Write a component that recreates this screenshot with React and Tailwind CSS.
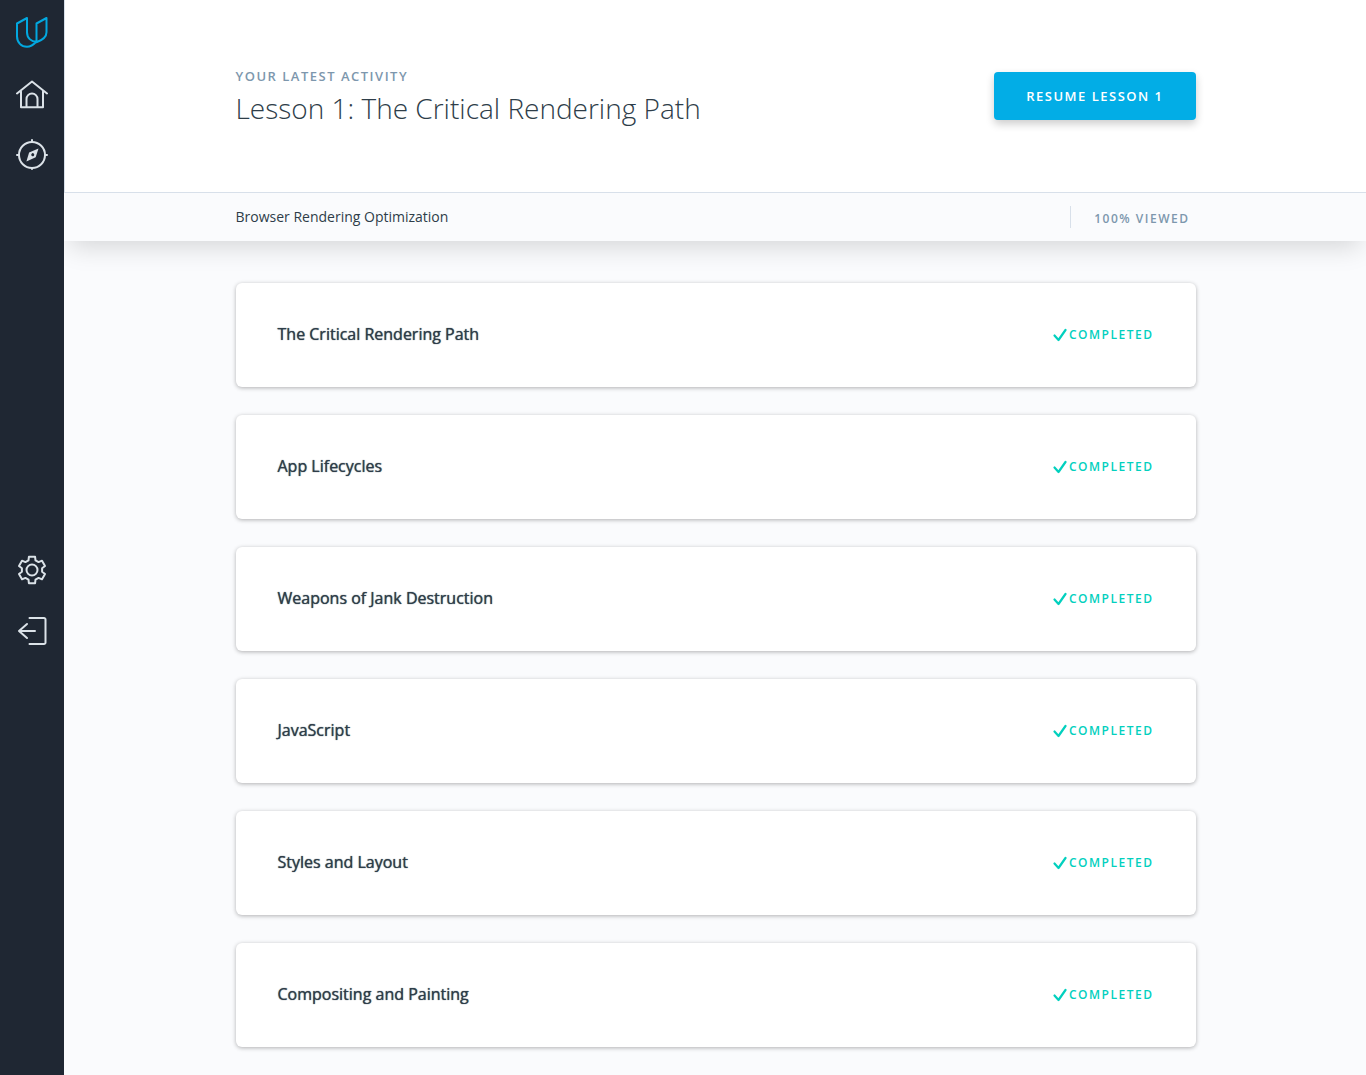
const lessons = [
  'The Critical Rendering Path',
  'App Lifecycles',
  'Weapons of Jank Destruction',
  'JavaScript',
  'Styles and Layout',
  'Compositing and Painting',
];

function Icon({ children }) {
  return (
    <svg
      className="size-8"
      viewBox="0 0 32 32"
      fill="none"
      stroke="currentColor"
      strokeWidth="2"
      strokeLinecap="round"
      strokeLinejoin="round"
      aria-hidden="true"
    >
      {children}
    </svg>
  );
}

function NavLink({ label, className = 'text-[#dbe2e8]', children }) {
  return (
    <a href="#" aria-label={label} className={className}>
      <Icon>{children}</Icon>
    </a>
  );
}

function Sidebar() {
  return (
    <aside className="relative w-16 shrink-0 bg-[#1f2733]">
      <nav className="flex h-[663px] flex-col items-center justify-between py-4">
        <div className="flex flex-col items-center gap-7">
          <NavLink label="Udacity" className="mb-0.5 text-[#02a8e0]">
            <path d="M1 7.5 11 2v14.3c0 5.6 4 9.5 9.500 9.500M1 7.500v12.800c0 6.200 4.300 10.500 10 10.500 3.500 0 6.600-2.200 9.500-5.300V7.500L30.500 2v14.300c0 5.400-5 8.200-10 10" />
          </NavLink>
          <NavLink label="Home">
            <path d="M1 15.500 16 3.500l15 12M5 13.500v15.800h22V13.500M10.500 29V21a5.500 5.500 0 0 1 11 0v8" />
          </NavLink>
          <NavLink label="Catalog">
            <circle cx="16" cy="17" r="13" />
            <path d="M16 2v2M16 30v1M1 17h2M29 17h2" />
            <path fill="currentColor" stroke="none" fillRule="evenodd" d="m22.500 10.500-2.800 8.800-9.300 4.200 2.700-9zm-4.600 5.200a1.500 1.500 0 1 0-2 2.200 1.500 1.500 0 0 0 2-2.200z" />
          </NavLink>
        </div>
        <div className="flex flex-col items-center gap-7">
          <NavLink label="Settings">
            <circle cx="16" cy="15" r="5.5" />
            <path d="M12.9 1.8H19.1L19.5 5.3 22.6 7.1 26 5.7 29 11 26.1 13.2V16.8L29 19 26 24.3 22.6 22.9 19.5 24.7 19.1 28.2H12.9L12.5 24.7 9.4 22.9 6 24.3 3 19 5.9 16.8V13.2L3 11 6 5.7 9.4 7.1 12.5 5.3Z" />
          </NavLink>
          <NavLink label="Sign out">
            <path d="M13.500 3H28a1.500 1.500 0 0 1 1.500 1.500v23A1.500 1.500 0 0 1 28 29H13.500M19 16H3M11 9l-8 7 8 7" />
          </NavLink>
        </div>
      </nav>
    </aside>
  );
}

function Container({ className, children }) {
  return <div className={`mx-auto w-full max-w-[960px] ${className}`}>{children}</div>;
}

function LessonCard({ title }) {
  return (
    <li className="flex items-center justify-between rounded-md bg-white px-[42px] py-10 shadow-[0_1px_4px_rgba(0,0,0,0.3)]">
      <h2 className="pb-0.5 text-base leading-[22px] font-medium [text-shadow:0_0_1px_currentColor]">{title}</h2>
      <span className="flex items-center gap-0.5 text-xs leading-6 font-semibold tracking-[1.5px] text-[#02d0be]">
        <svg className="size-3.5" viewBox="0 0 14 14" fill="none" stroke="currentColor" strokeWidth="2.2" strokeLinecap="round" strokeLinejoin="round" aria-hidden="true">
          <path d="m1.500 7.500 4 4.500L12.500 2" />
        </svg>
        COMPLETED
      </span>
    </li>
  );
}

export default function App() {
  return (
    <div className="flex min-h-screen bg-[#fafbfd] font-['Open_Sans',sans-serif] text-[#2e3d49]">
      <Sidebar />
      <main className="min-w-0 grow">
        <div className="shadow-[0_12px_24px_-6px_rgba(0,0,0,0.15)]">
          <header className="border-b border-l border-[#d8e0ea] bg-white">
            <Container className="flex items-start justify-between pt-[66px] pb-16">
              <div>
                <p className="text-[13px] leading-5 font-semibold tracking-[1.5px] text-[#7d97ad]">YOUR LATEST ACTIVITY</p>
                <h1 className="pt-0.5 text-[28px] leading-10 font-light">Lesson 1: The Critical Rendering Path</h1>
              </div>
              <button type="button" className="mt-1.5 h-12 rounded-sm bg-[#02ade6] px-8 pt-0.5 text-[13px] font-semibold tracking-[1.5px] text-white shadow-[0_4px_8px_rgba(0,0,0,0.2)]">
                RESUME LESSON 1
              </button>
            </Container>
          </header>
          <div className="border-l border-[#fafbfd] bg-[#fafbfd]">
            <Container className="flex h-12 items-center justify-between pr-1.5">
              <p className="text-sm">Browser Rendering Optimization</p>
              <p className="border-l border-[#d8e0ea] pt-1 pl-[23px] text-xs leading-[18px] font-semibold tracking-[1.5px] text-[#7d97ad]">100% VIEWED</p>
            </Container>
          </div>
        </div>
        <div className="border-l border-transparent">
          <Container className="pt-[42px] pb-7">
            <ul className="flex flex-col gap-7">
              {lessons.map((title) => (
                <LessonCard key={title} title={title} />
              ))}
            </ul>
          </Container>
        </div>
      </main>
    </div>
  );
}
